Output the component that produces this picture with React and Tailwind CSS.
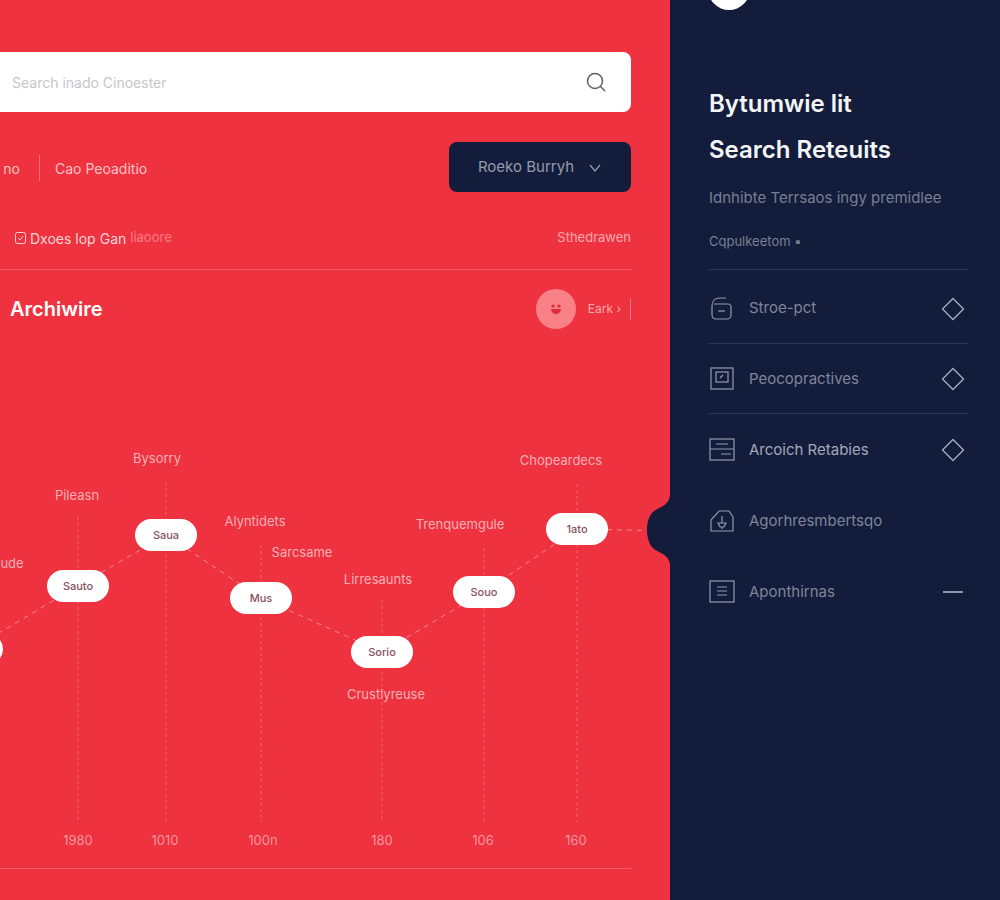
import React from "react";

const nodes = [
  { x: -28, y: 649, t: "" },
  { x: 78, y: 586, t: "Sauto" },
  { x: 166, y: 535, t: "Saua" },
  { x: 261, y: 598, t: "Mus" },
  { x: 382, y: 652, t: "Sorio" },
  { x: 484, y: 592, t: "Souo" },
  { x: 577, y: 529, t: "1ato" },
];
const stems = [
  [78, 517],
  [166, 482],
  [261, 545],
  [382, 600],
  [484, 548],
  [577, 484],
];
const labels = [
  { x: 157, y: 459, t: "Bysorry" },
  { x: 77, y: 496, t: "Pileasn" },
  { x: 12, y: 564, t: "ude" },
  { x: 255, y: 522, t: "Alyntidets" },
  { x: 302, y: 553, t: "Sarcsame" },
  { x: 378, y: 580, t: "Lirresaunts" },
  { x: 460, y: 525, t: "Trenquemgule" },
  { x: 561, y: 461, t: "Chopeardecs" },
  { x: 386, y: 695, t: "Crustlyreuse" },
];
const years = [
  [78, "1980"],
  [165, "1010"],
  [263, "100n"],
  [382, "180"],
  [483, "106"],
  [576, "160"],
];
const TOP = 329;

function Chart() {
  const pts = nodes.map((n) => `${n.x},${n.y - TOP}`).join(" ");
  return (
    <div className="relative flex-1 -ml-4">
      <div className="absolute inset-0 ml-4">
        <svg className="absolute left-0 top-0" width="670" height="539" fill="none">
          {stems.map(([x, y]) => (
            <line key={x} x1={x} x2={x} y1={y - TOP} y2={822 - TOP} stroke="#ffffff" strokeOpacity="0.26" strokeDasharray="3 3" />
          ))}
          <polyline points={pts} stroke="#ffffff" strokeOpacity="0.42" strokeDasharray="5 5" />
          <line x1="577" x2="670" y1={529 - TOP} y2={531 - TOP} stroke="#ffffff" strokeOpacity="0.42" strokeDasharray="5 5" />
        </svg>
        {labels.map((l) => (
          <span
            key={l.t}
            className="absolute -translate-x-1/2 -translate-y-1/2 whitespace-nowrap text-[13px] text-[#f9b0b5]"
            style={{ left: l.x, top: l.y - TOP }}
          >
            {l.t}
          </span>
        ))}
        {nodes.map((n) => (
          <span
            key={n.x}
            className="absolute flex h-[32px] w-[62px] -translate-x-1/2 -translate-y-1/2 items-center justify-center rounded-full bg-white text-[11px] font-medium text-[#87505f]"
            style={{ left: n.x, top: n.y - TOP }}
          >
            {n.t}
          </span>
        ))}
        {years.map(([x, t]) => (
          <span
            key={t}
            className="absolute -translate-x-1/2 -translate-y-1/2 text-[13px] text-[#f7969d]"
            style={{ left: x, top: 841 - TOP }}
          >
            {t}
          </span>
        ))}
      </div>
    </div>
  );
}

const Diamond = () => (
  <svg className="mr-[3px] mt-[1px]" width="24" height="24" viewBox="0 0 24 24" fill="none" stroke="#a9afbf" strokeWidth="1.3">
    <path d="M12 1.5 L22.5 12 L12 22.5 L1.5 12 Z" />
  </svg>
);
const Dash = () => <div className="mr-[5px] h-[2px] w-[20px] bg-[#8f95a8]" />;

const icons = [
  <g key="a">
    <path d="M3 10c0-5 3-8 8-8h6" />
    <path d="M3 10v9a4 4 0 0 0 4 4h11a4 4 0 0 0 4-4v-8a3 3 0 0 0-3-3H5" />
    <path d="M9 15h7" />
  </g>,
  <g key="b">
    <rect x="2" y="2" width="22" height="21" />
    <rect x="7" y="6" width="12" height="10" />
    <path d="M11 12l3-3" />
  </g>,
  <g key="c">
    <rect x="1" y="2" width="24" height="21" />
    <path d="M1 12h24M7 7h12M12 17h10" />
  </g>,
  <g key="d">
    <path d="M2 23V12L10 3h10l4 6v14Z" />
    <path d="M13 8v7M9 15h8l-2 4h-4ZM13 19v2" />
  </g>,
  <g key="e">
    <rect x="1" y="2" width="24" height="21" />
    <path d="M8 8h10M8 12h10M8 16h10" />
  </g>,
];

const rows = [
  { t: "Stroe-pct", tail: <Diamond />, cls: "h-[74px] pt-[3px] border-b border-[#2c3654]" },
  { t: "Peocopractives", tail: <Diamond />, cls: "h-[70px] border-b border-[#2c3654]" },
  { t: "Arcoich Retabies", tail: <Diamond />, cls: "h-[71px]", bright: true },
  { t: "Agorhresmbertsqo", tail: null, cls: "h-[71px]" },
  { t: "Aponthirnas", tail: <Dash />, cls: "h-[71px]" },
];

export default function App() {
  return (
    <div className="relative flex h-[900px] w-[1000px] overflow-hidden font-['Inter',sans-serif]">
      <main className="flex w-[670px] shrink-0 flex-col bg-[#ee3240] pb-[31px] pr-[39px] pt-[52px]">
        <div className="-ml-4 flex h-[60px] shrink-0 items-center justify-between rounded-lg bg-white pl-[28px] pr-[24px]">
          <span className="text-[14px] text-[#c6c6c8]">Search inado Cinoester</span>
          <svg width="22" height="22" viewBox="0 0 22 22" fill="none" stroke="#5f5f64" strokeWidth="1.5">
            <circle cx="10" cy="10" r="7.5" />
            <path d="M15.5 15.5 20 20" />
          </svg>
        </div>

        <div className="mt-[30px] flex h-[50px] shrink-0 items-center justify-between">
          <div className="flex items-center pt-[2px] text-[14px] text-[#fbc2c6]">
            <span className="w-[20px] text-right">no</span>
            <span className="ml-[19px] mr-[15px] h-[26px] w-px bg-[#f4727b]" />
            <span>Cao Peoaditio</span>
          </div>
          <button className="flex h-[50px] w-[182px] items-center justify-center gap-[14px] rounded-lg bg-[#131d3b] pt-[1px] text-[15px] text-[#959bad]">
            Roeko Burryh
            <svg width="14" height="10" viewBox="0 0 14 10" fill="none" stroke="#959bad" strokeWidth="1.2">
              <path d="M2 2l5 6 5-6" />
            </svg>
          </button>
        </div>

        <div className="mt-[34px] flex h-[44px] shrink-0 items-center justify-between border-b border-[#f65b66] pb-[19px]">
          <div className="flex items-center gap-[4px] text-[14px] text-[#fcd4d7]">
            <svg className="ml-[15px]" width="11" height="12" viewBox="0 0 11 12" fill="none" stroke="#fcd4d7">
              <rect x="0.5" y="0.5" width="10" height="11" rx="2" />
              <path d="M3 6l2 2 3-4" />
            </svg>
            <span>Dxoes lop</span>
            <span>Gan</span>
            <span className="text-[13px] text-[#f67f88]">liaoore</span>
          </div>
          <span className="text-[13px] text-[#f9a9af]">Sthedrawen</span>
        </div>

        <div className="mt-[19px] flex h-[40px] shrink-0 items-center justify-between">
          <span className="ml-[10px] text-[20px] font-semibold text-white">Archiwire</span>
          <div className="flex items-center">
            <span className="flex h-[40px] w-[40px] items-center justify-center rounded-full bg-[#f98087]">
              <svg width="14" height="12" viewBox="0 0 14 12" fill="#e02b3c">
                <circle cx="4" cy="3" r="1.6" />
                <circle cx="10" cy="3" r="1.6" />
                <path d="M2 6h10c0 3-3 5-5 5S2 9 2 6Z" />
              </svg>
            </span>
            <span className="ml-[12px] text-[12px] text-[#f9a9af]">Eark ›</span>
            <span className="ml-[9px] h-[22px] w-px bg-[#f4727b]" />
          </div>
        </div>

        <Chart />
        <div className="-ml-4 h-px shrink-0 bg-[#f65b66]" />
      </main>

      <aside className="relative flex flex-1 flex-col bg-[#131d3b] pl-[39px] pr-[32px] pt-[85px]">
        <span className="absolute left-[38px] top-[-32px] h-[42px] w-[42px] rounded-full bg-white" />
        <svg className="absolute left-[-23px] top-[496px]" width="23" height="68" viewBox="0 0 24 70" preserveAspectRatio="none" fill="#131d3b">
          <path d="M24 0C22 10 14 11 8 15 2 19 0 28 0 35s2 16 8 20c6 4 14 5 16 15Z" />
        </svg>
        <h1 className="text-[24px] font-semibold leading-[38px] text-[#f4f5f7]">Bytumwie lit</h1>
        <h2 className="mt-[8px] text-[24px] font-semibold leading-[38px] text-[#f4f5f7]">Search Reteuits</h2>
        <p className="mt-[17px] whitespace-nowrap text-[15px] leading-[24px] text-[#777f94]">Idnhibte Terrsaos ingy premidlee</p>
        <p className="mt-[19px] text-[13px] leading-[24px] text-[#777f94]">Cqpulkeetom ▪</p>
        <div className="mt-[16px] border-t border-[#2c3654]">
          {rows.map((r, i) => (
            <div key={r.t} className={`flex items-center justify-between ${r.cls}`}>
              <div className="flex items-center pt-[1px]">
                <svg width="26" height="26" viewBox="0 0 26 26" fill="none" stroke="#949aac" strokeWidth="1.2">
                  {icons[i]}
                </svg>
                <span className={`ml-[14px] text-[15px] ${r.bright ? "text-[#a2a8b8]" : "text-[#7e8599]"}`}>{r.t}</span>
              </div>
              {r.tail}
            </div>
          ))}
        </div>
      </aside>
    </div>
  );
}
